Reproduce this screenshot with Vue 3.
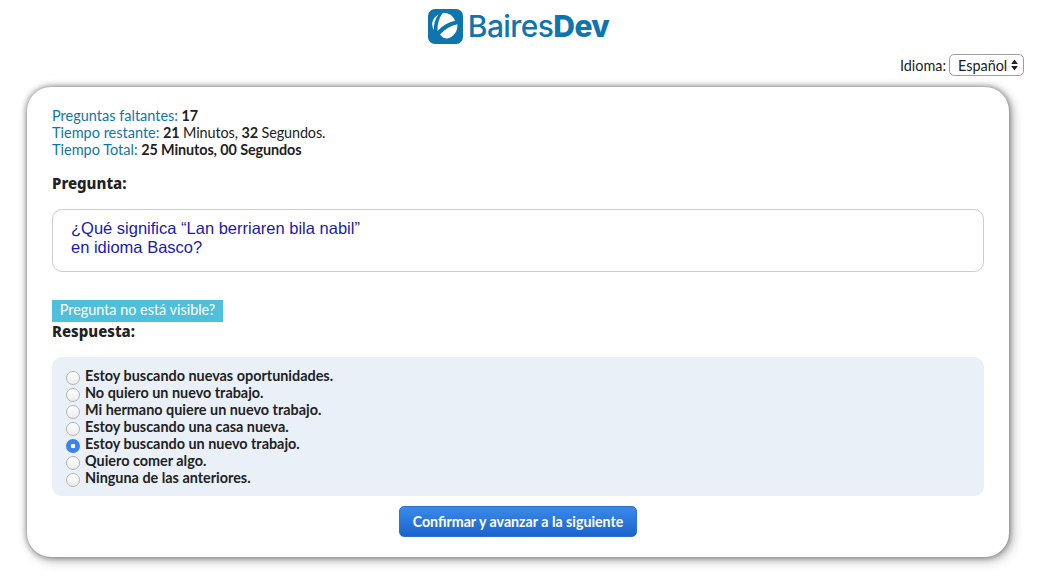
<script setup>
import { ref } from "vue";

const options = [
  "Estoy buscando nuevas oportunidades.",
  "No quiero un nuevo trabajo.",
  "Mi hermano quiere un nuevo trabajo.",
  "Estoy buscando una casa nueva.",
  "Estoy buscando un nuevo trabajo.",
  "Quiero comer algo.",
  "Ninguna de las anteriores.",
];
const selected = ref(4);
</script>

<template>
  <div class="page">
    <header class="logo">
      <svg class="mark" width="35" height="35" viewBox="0 0 35 35">
        <rect width="35" height="35" rx="7" fill="#0f75ae" />
        <path d="M10.5 5.5 C7 10 5.5 15.500 6 21 C4.500 18.500 4 16 4.300 13.500 C5 10 7.500 7 10.500 5.500 Z" fill="#fff" />
        <path d="M9.500 22 C9.300 15 11 9 14.500 4.300 C20 3.300 25 6.500 27 11.800 C20 13.500 14 17 9.500 22 Z" fill="#fff" />
        <path d="M12 25.500 C16.500 20.500 22.500 16.800 29.300 15.200 C30 21.500 26 28 19.500 29.500 C16.500 29.700 13.800 28 12 25.500 Z" fill="#fff" />
      </svg>
      <span class="brand">Baires<b>Dev</b></span>
    </header>

    <div class="lang">
      <label for="lang">Idioma:</label>
      <div class="select">
        <span>Español</span>
        <svg width="7" height="12" viewBox="0 0 7 12">
          <path d="M3.5 0.5 L6.8 5 H0.2 Z M3.5 11.5 L0.2 7 H6.8 Z" fill="#222" />
        </svg>
      </div>
    </div>

    <main class="card">
      <div class="stats">
        <div><span class="key">Preguntas faltantes:</span> <b>17</b></div>
        <div><span class="key">Tiempo restante:</span> <b>21</b> Minutos, <b>32</b> Segundos.</div>
        <div><span class="key">Tiempo Total:</span> <b>25 Minutos, 00 Segundos</b></div>
      </div>

      <h3 class="title first">Pregunta:</h3>
      <div class="question">
        ¿Qué significa “Lan berriaren bila nabil”<br />
        en idioma Basco?
      </div>

      <button class="hint">Pregunta no está visible?</button>
      <h3 class="title">Respuesta:</h3>

      <div class="answers">
        <label v-for="(o, i) in options" :key="o" class="answer">
          <input type="radio" name="answer" :value="i" v-model="selected" />
          <span>{{ o }}</span>
        </label>
      </div>

      <div class="actions">
        <button class="confirm">Confirmar y avanzar a la siguiente</button>
      </div>
    </main>
  </div>
</template>

<style>
html,
body {
  background: #fff;
  overflow: hidden;
}
</style>

<style scoped>
.page {
  width: 1037px;
  height: 579px;
  box-sizing: border-box;
  padding-top: 8px;
  font-family: Lato, "Liberation Sans", sans-serif;
  font-size: 14.4px;
  line-height: 17px;
  color: #222;
}

.logo {
  display: flex;
  justify-content: center;
  align-items: center;
  gap: 5px;
  height: 37px;
}

.brand {
  font-family: Inter, sans-serif;
  font-weight: 500;
  font-size: 30px;
  letter-spacing: -0.6px;
  line-height: 37px;
  color: #0f75ae;
}

.brand b {
  font-weight: 800;
}

.lang {
  display: flex;
  justify-content: flex-end;
  align-items: center;
  gap: 3px;
  height: 22px;
  margin-top: 9px;
  padding-right: 13px;
}

.select {
  display: flex;
  align-items: center;
  gap: 4px;
  box-sizing: border-box;
  width: 75px;
  height: 22px;
  padding: 0 3px 0 8px;
  border: 1px solid #a0a0a0;
  border-radius: 5px;
  background: #fff;
}

.card {
  box-sizing: border-box;
  width: 982px;
  height: 470px;
  margin: 11px 0 0 27px;
  padding: 20px 25px 0;
  border-radius: 24px;
  background: #fff;
  box-shadow: 0 0 6px rgba(0, 0, 0, 0.5), 3px 3px 12px rgba(0, 0, 0, 0.3);
}

.stats {
  letter-spacing: -0.1px;
}

.key {
  font-size: 14.5px;
  letter-spacing: 0;
  color: #0f75ae;
}

.stats b {
  font-weight: 700;
}

.title {
  margin: 0;
  font-family: "Noto Sans", sans-serif;
  font-weight: 800;
  font-size: 15px;
  line-height: 18px;
  color: #222;
}

.title.first {
  margin-top: 16px;
}

.question {
  box-sizing: border-box;
  height: 63px;
  margin-top: 17px;
  padding: 9px 18px;
  border: 1px solid #ccc;
  border-radius: 10px;
  font-family: "Liberation Sans", sans-serif;
  font-size: 16.500px;
  line-height: 19px;
  color: #1a1ab0;
}

.hint {
  display: block;
  box-sizing: border-box;
  width: 171px;
  height: 22px;
  margin-top: 28px;
  padding: 0 0 3px;
  border: 0;
  background: #4fbfdb;
  color: #fff;
  font-family: Lato, sans-serif;
  font-size: 14.4px;
}

.answers {
  box-sizing: border-box;
  height: 139px;
  margin-top: 17px;
  padding: 10px 14px;
  border-radius: 10px;
  background: #e9f0f8;
}

.answer {
  display: flex;
  align-items: flex-start;
  height: 17px;
  font-weight: 700;
  color: #222;
}

.answer input {
  appearance: none;
  box-sizing: border-box;
  width: 14px;
  height: 14px;
  margin: 4px 5px 0 0;
  flex: none;
  border: 1px solid #b4b4b4;
  border-radius: 50%;
  background: linear-gradient(#fff, #ececec);
}

.answer input:checked {
  border: 0;
  background: radial-gradient(circle, #fff 0 2px, #3b82f0 2.6px);
}

.actions {
  display: flex;
  justify-content: center;
  margin-top: 10px;
}

.confirm {
  box-sizing: border-box;
  width: 238px;
  height: 31px;
  padding: 0;
  border: 1px solid #2a72d0;
  border-radius: 5px;
  background: linear-gradient(#3a8aea, #1b63cc);
  color: #fff;
  font-family: Lato, sans-serif;
  font-size: 14.200px;
  font-weight: 700;
}
</style>
